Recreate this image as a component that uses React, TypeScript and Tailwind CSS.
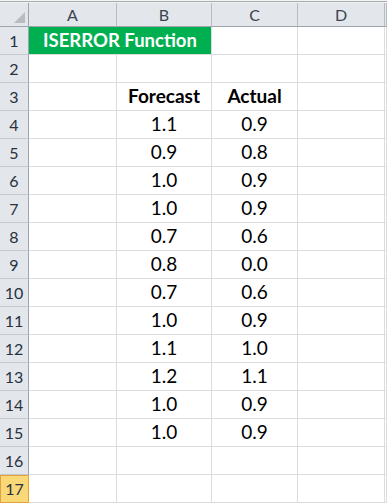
import React from 'react';

const rows: [string, string][] = [
  ['1.1', '0.9'],
  ['0.9', '0.8'],
  ['1.0', '0.9'],
  ['1.0', '0.9'],
  ['0.7', '0.6'],
  ['0.8', '0.0'],
  ['0.7', '0.6'],
  ['1.0', '0.9'],
  ['1.1', '1.0'],
  ['1.2', '1.1'],
  ['1.0', '0.9'],
  ['1.0', '0.9'],
];

const font = { fontFamily: 'Lato, "Open Sans", "Liberation Sans", sans-serif' };

const cols = 'grid grid-cols-[29px_88px_95px_86px_87px_1fr]';
const cell = 'border-r border-b border-[#dadcdd] h-[28px] flex items-end justify-center pb-[3px] text-[19px] leading-[22px] text-black';
const rowHead = 'border-r border-b border-[#9ea4ad] border-b-[#c5c9cf] bg-[#e3e6ea] h-[28px] flex items-center justify-center text-[16px] text-[#27313f]';

const Row = ({ n, children }: { n: number; children?: React.ReactNode }) => (
  <div className={cols}>
    <div className={rowHead}>{n}</div>
    {children}
  </div>
);

export default function App() {
  return (
    <div className="w-[387px] h-[504px] overflow-hidden bg-white" style={font}>
      {/* top frame lines */}
      <div className="h-px bg-[#f4f4f4]" />
      <div className="h-px bg-[#a9acb0]" />
      <div className="h-px bg-[#eef0f2]" />

      {/* column headers */}
      <div className={cols}>
        <div className="relative h-[24px] bg-[#e3e6ea] border-r border-b border-[#9ea4ad]">
          <div className="absolute right-[3px] bottom-[3px] w-0 h-0 border-l-[11px] border-l-transparent border-b-[11px] border-b-[#b9bdc2]" />
        </div>
        {['A', 'B', 'C', 'D', ''].map((c, i) => (
          <div
            key={i}
            className="h-[24px] bg-[#e3e6ea] border-r border-b border-[#b7bcc3] border-b-[#9ea4ad] flex items-center justify-center text-[16px] text-[#3a4350]"
          >
            {c}
          </div>
        ))}
      </div>

      <Row n={1}>
        <div className="col-span-2 h-[28px] bg-[#00b050] border-r border-b border-[#dadcdd] flex items-end justify-center pb-[3px] text-[18.5px] leading-[22px] font-bold text-white">
          ISERROR Function
        </div>
        <div className={cell} />
        <div className={cell} />
        <div className={cell} />
      </Row>

      <Row n={2}>
        <div className={cell} />
        <div className={cell} />
        <div className={cell} />
        <div className={cell} />
        <div className={cell} />
      </Row>

      <Row n={3}>
        <div className={cell} />
        <div className={`${cell} font-bold`}>Forecast</div>
        <div className={`${cell} font-bold`}>Actual</div>
        <div className={cell} />
        <div className={cell} />
      </Row>

      {rows.map(([f, a], i) => (
        <Row key={i} n={i + 4}>
          <div className={cell} />
          <div className={cell}>{f}</div>
          <div className={cell}>{a}</div>
          <div className={cell} />
          <div className={cell} />
        </Row>
      ))}

      <Row n={16}>
        <div className={cell} />
        <div className={cell} />
        <div className={cell} />
        <div className={cell} />
        <div className={cell} />
      </Row>

      <div className={cols}>
        <div className="h-[28px] bg-[#f9d878] border border-[#e2a33c] flex items-center justify-center text-[16px] text-[#27313f]">17</div>
        <div className={cell} />
        <div className={cell} />
        <div className={cell} />
        <div className={cell} />
        <div className={cell} />
      </div>
    </div>
  );
}
